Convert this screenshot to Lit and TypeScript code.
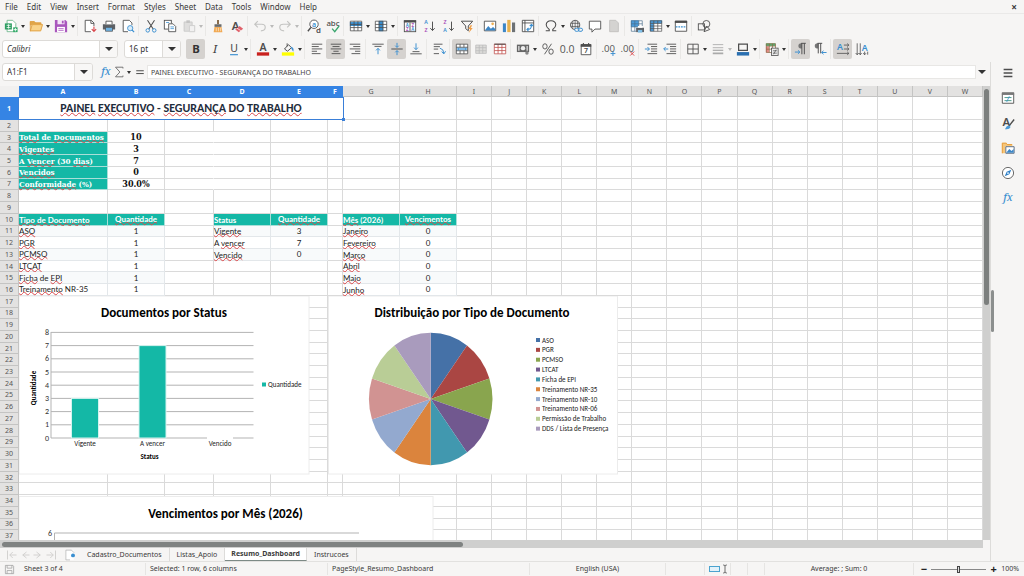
import { LitElement, html, svg, css, nothing } from "lit";
import { customElement, property } from "lit/decorators.js";
import { classMap } from "lit/directives/class-map.js";

const K = "#4d4d4d";
const B = "#3a8fd0";
const R = "#d8474c";
const line = (d: string, c = K, w = 1) =>
  svg`<path d=${d} fill="none" stroke=${c} stroke-width=${w} />`;
const fill = (d: string, c = K) => svg`<path d=${d} fill=${c} />`;
const glyph = (t: string, x: number, y: number, size: number, c = K, weight = "400", style = "normal", family = "Noto Sans") =>
  svg`<text x=${x} y=${y} font-size=${size} fill=${c} font-weight=${weight} font-style=${style} font-family="${family}, sans-serif" text-anchor="middle">${t}</text>`;

const grid = (c = K) => line("M1.5 2.5H14.5V13.5H1.5ZM1.5 6.2H14.5M1.5 9.8H14.5M5.8 2.5V13.5M10.2 2.5V13.5", c, 0.9);

const ICONS: Record<string, unknown> = {
  new: svg`${fill("M3 1H10.5L14 4.5V15H3Z", "#fff")}${line("M3.5 1.5H10L13.5 5V14.5H3.5Z", "#6fb58a")}${fill("M1 5H9V12H1Z", "#2e9e62")}${line("M3 7.2H7.5M3 9.8H7.5M5.2 6V11", "#fff", 0.9)}${fill("M10.5 9.5H15.5V15H10.5Z", "#2fa866")}${line("M13 10.3V14.2M11 12.2H15", "#fff", 1)}`,
  open: svg`${fill("M1 2.5H6L7.5 4H14V7H1Z", "#e0a64a")}${fill("M1 14L3.5 6H16L13.5 14Z", "#f9d38a")}${line("M1.5 14V3H6L7.5 4.5H13.5V6M1.5 13.5L3.6 6.4H15.4L13.4 13.5Z", "#dfa044", 1)}`,
  save: svg`${fill("M1 1H13L15 3V15H1Z", "#a957bd")}${fill("M4 1H12V6H4Z", "#f4e7f7")}${fill("M9 2H11V5H9Z", "#a957bd")}${fill("M3.5 9H12.5V15H3.5Z", "#fff")}${line("M5 11H11M5 13H11", "#a957bd", 0.9)}`,
  pdf: svg`${fill("M3 1H10L13 4V15H3Z", "#fff")}${line("M9 14.5H2.5V1.5H9.5L12.5 4.5V8M9 1.5V5H12.5", K)}${line("M12.5 8.5V14M10 11.5L12.5 14.3L15 11.5", R, 1.3)}`,
  print: svg`${fill("M1 6H15V12H1Z", "#5d6166")}${fill("M4 2H12V6H4Z", "#fff")}${line("M4.5 6V2.5H11.5V6", K)}${fill("M4 9.5H12V14H4Z", "#6fb3e4")}${line("M4 9.5H12V14H4Z", K, 0.8)}`,
  preview: svg`${fill("M3 1H10L13 4V15H3Z", "#fff")}${line("M8 14.5H2.5V1.5H9.5L12.5 4.5V7", K)}<circle cx="10.5" cy="10.5" r="3" fill="#d9ecf9" stroke=${B} />${line("M12.6 12.6L15 15", B, 1.3)}`,
  cut: svg`${line("M4 1.5L10.5 11.5M12 1.5L5.5 11.5", K, 1.2)}<circle cx="4.3" cy="13" r="2" fill="none" stroke=${B} stroke-width="1.1" /><circle cx="11.7" cy="13" r="2" fill="none" stroke=${B} stroke-width="1.1" />`,
  copy: svg`<rect x="1.5" y="1.5" width="8" height="10" fill="#fff" stroke=${K} />${fill("M6 5H12L15 8V15H6Z", "#fff")}${line("M6.5 5.5H11.5L14.5 8.5V14.5H6.5Z", K)}${line("M8.5 9H12.5M8.5 11H12.5M3.5 4H7", B, 0.9)}`,
  paste: svg`<g opacity=".45">${fill("M2 3H12V14H2Z", "#c4c4c2")}${line("M2.5 3.5H11.5V14H2.5Z", "#999")}${fill("M5 1.5H9V4.5H5Z", "#888")}${fill("M8 7H15V15H8Z", "#eee")}${line("M8.5 7.5H14.5V14.5H8.5Z", "#999")}</g>`,
  clone: svg`${line("M8 1V6", "#7b5a35", 2)}${fill("M4 6H12V9H4Z", "#6b6b6b")}${fill("M4 9H12L13 15H3Z", "#f1a850")}${line("M6 10V14M8.5 10V14M11 10V14", "#fff", 0.6)}`,
  clear: svg`${glyph("A", 6.5, 12, 13, K, "600")}${fill("M6 12L11 8L15 11L10 15Z", "#e0626b")}${line("M8 10.5L12.5 13.4", "#fff", 0.8)}`,
  undo: line("M5.5 2.5L2 6L5.5 9.5M2.5 6H10Q14 6 14 9.5Q14 13.5 9 13.5", "#c4c4c2", 1.3),
  redo: line("M10.5 2.5L14 6L10.5 9.5M13.5 6H6Q2 6 2 9.5Q2 13.5 7 13.5", "#c4c4c2", 1.3),
  find: svg`<circle cx="8" cy="6" r="4.8" fill="#fff" stroke=${K} />${line("M4.5 9.5L1 14", K, 1.6)}${glyph("a", 8, 8.6, 8, B, "600")}${glyph("d", 13, 15.5, 9, K, "600")}`,
  spell: svg`${glyph("abc", 8, 8, 9, K, "500")}${line("M7 11L10 14.5L15 8", "#3aa66e", 1.5)}`,
  row: svg`${fill("M1 2H15V14H1Z", "#fff")}${fill("M1 3.5H15V8H1Z", B)}${grid()}`,
  col: svg`${fill("M1 2H15V14H1Z", "#fff")}${fill("M5.5 2H10.5V14H5.5Z", B)}${grid()}`,
  sort: svg`<rect x="1.5" y="2" width="13" height="12.5" fill="#fff" stroke=${K} />${fill("M1 1.5H15V4H1Z")}${line("M8 4V14", K)}${glyph("A", 4.8, 9, 5, B, "700")}${glyph("Z", 4.8, 14, 5, "#a64fb8", "700")}${glyph("Z", 11.2, 9, 5, "#a64fb8", "700")}${glyph("A", 11.2, 14, 5, B, "700")}`,
  az: svg`${glyph("A", 4.5, 6.2, 6, B, "600")}${glyph("Z", 4.5, 15, 6, "#a64fb8", "600")}${line("M12 3V13M9.5 10.5L12 13.2L14.5 10.5", K, 1.1)}`,
  za: svg`${glyph("Z", 4.5, 6.2, 6, "#a64fb8", "600")}${glyph("A", 4.5, 15, 6, B, "600")}${line("M12 3V13M9.5 10.5L12 13.2L14.5 10.5", K, 1.1)}`,
  filter: svg`${line("M1.5 2.5H14.5L9.5 8V13.5L6.5 11V8Z", K, 1.1)}${fill("M12 7L9.5 11.5H11.5L10 16L14.5 10.3H12.3L14 7Z", "#f0a04b")}`,
  image: svg`${fill("M1 2H15V14H1Z", "#fff")}${line("M1.5 2.5H14.5V13.5H1.5Z", K)}${fill("M2 13L6 8L9 11L11.5 9L14 11.5V13Z", "#3c86c6")}<circle cx="11" cy="5.5" r="1.5" fill="#f0ae4f" />`,
  chart: svg`${fill("M1 5H4.5V15H1Z", "#3c86c6")}${fill("M6 1H9.8V15H6Z", "#e9b24d")}${fill("M11.4 4H15V15H11.4Z", "#6d7175")}`,
  pivot: svg`${fill("M1.5 1.5H14.5V14.5H1.5Z", "#fff")}${line("M1.5 1.5H14.5V14.5H1.5ZM1.5 4.5H14.5M4.5 1.5V14.5", K)}${line("M7 12Q12 12 12 7M10 8L12 6.3L14 8M8.6 10.2L6.8 12L8.6 13.8", B, 1.2)}`,
  omega: line("M2 13.5H6V12Q2.5 9.5 2.5 6.7Q2.8 2 8 2Q13.2 2 13.5 6.7Q13.5 9.5 10 12V13.5H14", K, 1.2),
  link: svg`<circle cx="7" cy="6.8" r="5.3" fill="none" stroke=${K} />${line("M2 5H12M2 8.5H12M7 1.5V12M4.6 2.5Q3 7 4.6 11M9.4 2.5Q11 7 9.4 11", K, 0.8)}<rect x="6.5" y="10.5" width="5" height="3.6" rx="1.8" fill="#f6f5f4" stroke=${B} stroke-width="1.1" /><rect x="10.5" y="10.5" width="5" height="3.6" rx="1.8" fill="none" stroke=${B} stroke-width="1.1" />`,
  comment: svg`${fill("M1.5 2.5H14.5V11.5H8L4.5 15V11.5H1.5Z", "#fff")}${line("M1.5 2.5H14.5V11.5H8L4.5 15V11.5H1.5Z", K)}`,
  header: svg`${fill("M3 1.5H10L13 4.5V14.5H3Z", "#d4d3d1")}${line("M3 1.5H10L13 4.5V14.5H3Z", "#bdbcba", 0.9)}`,
  printarea: svg`${fill("M1 1.5H14V14H1Z", "#fff")}${fill("M1 1.5H10V9H1Z", "#4c9bd9")}${line("M1.5 2H14V8M1.5 2V14H7M1.5 5.5H14M1.5 9H10M5.5 2V14M10 2V9", "#4a6f8d", 0.8)}${fill("M7 10H16V15H7Z", "#5d6166")}${fill("M9 12.5H14V15.5H9Z", "#7fbfe8")}${fill("M9 8H14V10H9Z", "#fff")}`,
  freeze: svg`${fill("M1 1.5H15V14H1Z", "#fff")}${fill("M1 1.5H15V5H1ZM1 1.5H5.5V14H1Z", "#4c9bd9")}${line("M1.5 2H14.5V14H1.5ZM1.5 5H14.5M1.5 8H14.5M1.5 11H14.5M5.5 2V14M10 2V14", K, 0.8)}`,
  split: svg`${fill("M1 2H15V14H1Z", "#fff")}${line("M1.5 2.5H14.5V14H1.5Z", K)}${fill("M1 2H15V4.5H1Z")}<path d="M2 9H14" stroke=${B} stroke-width="1.2" stroke-dasharray="2 1" />`,
  shapes: svg`<rect x="1.5" y="5.5" width="7" height="7" fill="none" stroke=${K} /><circle cx="10.7" cy="5.7" r="4" fill="none" stroke=${K} />${line("M8 14.5L14.5 12L11 8Z", K)}`,
  B: glyph("B", 8, 13, 13, "#333", "700"),
  I: glyph("I", 8, 13, 13, "#444", "400", "italic", "Noto Serif"),
  U: svg`${glyph("U", 8, 11.5, 12, "#444", "400")}${line("M3.5 14.5H12.5", B, 1.3)}`,
  A: svg`${glyph("A", 8, 10.2, 12, K, "600")}${fill("M1 11.8H15V15.6H1Z", "#c9211e")}`,
  mark: svg`${line("M4 8L8.5 3L12 6.5L7.5 10.5Z", K, 1.1)}${line("M7 1.5V5", K)}${fill("M11 5Q15.5 6 14 11L12 8Z", "#3f8fd0")}${fill("M1 11.8H15V15.6H1Z", "#ffff00")}`,
  left: line("M2 2.5H14M2 5.2H10M2 7.9H14M2 10.6H8M2 13.3H12", K, 1),
  center: line("M2 2.5H14M4 5.2H12M2 7.9H14M5 10.6H11M3 13.3H13", K, 1),
  right: line("M2 2.5H14M6 5.2H14M2 7.9H14M8 10.6H14M4 13.3H14", K, 1),
  top: svg`${line("M1.5 2.5H14.5M4 5H12", K, 1)}${line("M8 14V7.5M5.8 9.6L8 7.2L10.2 9.6", B, 1.1)}`,
  middle: svg`${line("M1.5 8H14.5", K, 1.1)}${line("M8 1V6M6 4.2L8 6.2L10 4.2M8 15V10M6 11.8L8 9.8L10 11.8", B, 1.1)}`,
  bottom: svg`${line("M1.5 13.5H14.5M4 11H12", K, 1)}${line("M8 1.5V8.5M5.8 6.4L8 8.8L10.2 6.4", B, 1.1)}`,
  wrap: svg`${line("M2 2.5H12M2 5.3H9M2 8.1H7M2 13.3H8", K, 1)}${line("M9 7Q13.5 8 13.5 13M11 11L13.5 13.6L15.5 10.6", B, 1.1)}`,
  merge: svg`${fill("M1.5 2.5H14.5V13.5H1.5Z", "#fff")}${fill("M1.5 6H14.5V10H1.5Z", "#bcdcf3")}${line("M1.5 2.5H14.5V13.5H1.5ZM1.5 6H14.5M1.5 10H14.5M5.8 2.5V6M10.2 2.5V6M5.8 10V13.5M10.2 10V13.5", K, 0.9)}${line("M3 8H13M4.5 6.8L3 8L4.5 9.2M11.5 6.8L13 8L11.5 9.2", B, 1)}`,
  mergeoff: svg`${fill("M2 3.5H14V13H2Z", "#dddcda")}${line("M2 3.5H14V13H2ZM2 6.5H14M2 10H14M6 3.5V13M10 3.5V13", "#bbb", 0.9)}`,
  unmerge: svg`${fill("M1.5 2.5H14.5V13.5H1.5Z", "#fff")}${grid("#c0504d")}${line("M1.5 2.5H14.5", K, 1.2)}`,
  money: svg`${fill("M1 3H15V11.5H1Z", "#666")}<circle cx="8" cy="7" r="2.5" fill="#eee" />${fill("M2.5 4.5H4V10H2.5ZM12 4.5H13.5V10H12Z", "#ddd")}<circle cx="12.5" cy="12.5" r="2" fill="#888" />`,
  percent: svg`<ellipse cx="4.5" cy="5" rx="2.5" ry="3" fill="none" stroke=${K} /><ellipse cx="11.5" cy="11" rx="2.5" ry="3" fill="none" stroke=${K} />${line("M12 2L4 14", K, 1)}`,
  decimal: glyph("0.0", 8, 12.5, 12, "#555", "400", "normal", "Open Sans"),
  date: svg`${fill("M2 3H14V14.5H2Z", "#fff")}${line("M2.5 3H13.5V14.5H2.5Z", K)}${fill("M2 2.5H14V5.5H2Z")}${line("M5 1V3.5M11 1V3.5", K, 1.2)}${glyph("7", 8, 13, 8, K, "600")}`,
  adddec: svg`${glyph(".00", 7, 11, 11, "#555", "400", "normal", "Open Sans")}${line("M12.5 10.5V16M9.8 13.2H15.3", B, 1.1)}`,
  deldec: svg`${glyph(".00", 7, 11, 11, "#555", "400", "normal", "Open Sans")}${line("M10.5 11L15 15.5M15 11L10.5 15.5", R, 1.1)}`,
  indent: svg`${line("M4 2.5H15M8 5.2H15M8 7.9H15M8 10.6H15M4 13.3H15", K)}${line("M1 8H6M4 5.8L6.2 8L4 10.2", B, 1.1)}`,
  outdent: svg`${line("M4 2.5H15M8 5.2H15M8 7.9H15M8 10.6H15M4 13.3H15", K)}${line("M1 8H6M3 5.8L.8 8L3 10.2", B, 1.1)}`,
  borders: line("M2 2.5H14V13.5H2ZM8 2.5V13.5M2 8H14", K, 1),
  lines: svg`${line("M2 3H14M2 6.5H14", "#aaa", 1)}${line("M2 9.5H14", "#aaa", 1.4)}${line("M2 13H14", "#aaa", 2)}`,
  bcolor: svg`${line("M3 2.5H13V9.5H3Z", K, 1.4)}${fill("M1 11.5H15V15.5H1Z", "#2a6fb0")}`,
  cond: svg`${fill("M1 1.5H12V12H1Z", "#fff")}${fill("M1 1.5H12V4.5H1Z", "#57b174")}${fill("M1 5H4.5V12H1Z", "#e38a84")}${line("M1.5 2H12V12H1.5ZM1.5 4.7H12M1.5 8.2H12M5 2V12M8.6 2V12", "#8d6a48", 0.8)}<rect x="7.5" y="7" width="7.5" height="8.5" fill="#eee" stroke=${K} stroke-width=".9" />${line("M9 10H13.5M9 12.7H13.5M12.8 8.7L9.8 14", K, 0.8)}`,
  ltr: svg`${fill("M9 1.5H8.2Q5 1.5 5 4.5Q5 7.5 9 7.5Z", "#777")}${line("M13.5 1.5H8.2M9 1.5V14M11.8 1.5V14", K, 1.1)}${line("M1 11.5H6.5M4.5 9.5L6.7 11.5L4.5 13.5", B, 1.1)}`,
  rtl: svg`${fill("M6 1.5H5.2Q2 1.5 2 4.5Q2 7.5 6 7.5Z", "#777")}${line("M10.5 1.5H5.2M6 1.5V13M8.8 1.5V13", K, 1.1)}${line("M10 12H15.5M12 10L9.8 12L12 14", B, 1.1)}`,
  hdir: svg`${glyph("A", 4.5, 9.5, 10, B, "600")}${line("M9 3.5H14.5M12.8 1.8L14.7 3.5L12.8 5.2M9 8H14.5M12.8 6.3L14.7 8L12.8 9.7M1 13H14.5M12.8 11.3L14.7 13L12.8 14.7", K, 0.9)}`,
  vdir: svg`${glyph("A", 11, 10, 10, B, "600")}${line("M2.5 1.5V14.5M.8 12.6L2.5 14.6L4.2 12.6M6 1.5V14.5M4.6 12.6L6 14.6L7.6 12.6M11 11V14.5M9.4 12.8L11 14.6L12.6 12.8M14.5 11V14.5", K, 0.9)}`,
  fx: glyph("fx", 8, 11.5, 12, B, "500", "italic", "Noto Serif"),
  sum: line("M12.5 4V2.5H4L9 8L4 13.5H12.5V12", "#666", 1),
  eq: line("M2 6H14M2 10.5H14", K, 1.6),
  menu: line("M3 4H13M3 8H13M3 12H13", K, 1.6),
  props: svg`${fill("M1.5 2H14.5V14H1.5Z", "#fff")}${line("M1.5 2.5H14.5V14H1.5Z", K)}${fill("M1 1.5H15V4.5H1Z", "#777")}${line("M4 7.5H12M4 11H12", "#4a9a8a", 1.1)}${line("M9.5 6L6.5 12.5", B, 0.9)}`,
  styles: svg`${glyph("A", 6, 11, 13, K, "600")}${line("M15 4L9.5 11", K, 1.6)}${fill("M4.5 15Q6 11 9 10.5L11 12.5Q9.5 16 4.5 15Z", "#4b9ad6")}`,
  gallery: svg`${fill("M1 2H6L7 3.5H13V14H1Z", "#f6c67a")}${line("M1.5 14V2.5H6L7 4H12.5", "#e59a3a")}${fill("M5 6H15.5V14.5H5Z", "#fff")}${line("M5.5 6.5H15V14H5.5Z", "#4b5f78")}${fill("M6 13.5L9.5 9L12 11.5L14.5 9V13.5Z", "#3c86c6")}`,
  navigator: svg`<circle cx="8" cy="8" r="6.4" fill="#fff" stroke="#666" stroke-width="1.1" />${fill("M11.8 4.2L9.5 9.5L4.2 11.8L6.5 6.5Z", "#2f80c8")}<circle cx="8" cy="8" r="1" fill="#fff" />`,
  disk: svg`${line("M2 2H13L14 3V14H2ZM4.5 2V6H11.5V2M4.5 14V9.5H11.5V14", "#999", 1)}`,
  cursor: svg`${line("M5 1.5Q8 1.5 8 3.5V12.5Q8 14.5 5 14.5M11 1.5Q8 1.5 8 3.5M8 12.5Q8 14.5 11 14.5", K, 1.3)}`,
  addsheet: svg`${fill("M2 1.5H13V14.5H2Z", "#fff")}${line("M2.5 14.5V1.5H10L13.5 5M2.5 14.5H8", "#aaa", 0.9)}<circle cx="12" cy="8.5" r="2.6" fill=${B} />`,
  first: line("M2 2V14M9 4L5 8L9 12M14 8H5", "#cfcecc", 1.2),
  prev: line("M10 4L5 8L10 12M14 8H5", "#cfcecc", 1.2),
  next: line("M6 4L11 8L6 12M2 8H11", "#cfcecc", 1.2),
  last: line("M14 2V14M7 4L11 8L7 12M2 8H11", "#cfcecc", 1.2),
};

const iconStyles = css`
  button {
    appearance: none;
    border: 0;
    padding: 0;
    margin: 0;
    background: none;
    font: inherit;
    color: inherit;
    display: flex;
    align-items: center;
    justify-content: center;
  }
  .icon { width: 14px; height: 14px; display: block; flex: none; overflow: visible; }
  .caret {
    width: 0;
    height: 0;
    border: 2px solid transparent;
    border-top: 3px solid #333;
    border-bottom: 0;
  }
  .big { border-width: 4px; border-top-width: 4px; }
`;

const icon = (name: string) =>
  html`<svg class="icon" viewBox="0 0 16 16" aria-hidden="true">${ICONS[name]}</svg>`;

/* "|" is a separator, a trailing "+" adds a drop-down arrow, a leading "!" is a pressed toggle, "-" at the end is a disabled arrow */
@customElement("tool-strip")
class ToolStrip extends LitElement {
  @property() items = "";
  static styles = [
    iconStyles,
    css`
      :host { display: flex; align-items: center; }
      .tool { width: 19px; height: 20px; border-radius: 2px; }
      .pressed { background: #d5d2cf; }
      .drop { width: 6px; height: 20px; }
      .dim { opacity: 0.3; }
      .sep { width: 1px; height: 20px; margin: 0 2px 0 1px; background: #e9e8e6; }
    `,
  ];
  render() {
    return this.items.split(" ").map((it) => {
      if (it === "|") return html`<span class="sep"></span>`;
      const name = it.replace(/[!+-]/g, "");
      return html`<button class=${classMap({ tool: true, pressed: it[0] === "!" })} aria-label=${name}>${icon(name)}</button>
        ${/[+-]$/.test(it)
          ? html`<button class=${classMap({ drop: true, dim: it.endsWith("-") })} aria-label="${name} options"><span class="caret"></span></button>`
          : nothing}`;
    });
  }
}

type Cell = { text: string; kind: string };
const cells: Record<string, Cell> = {};
const put = (ref: string, text: string, kind: string) => (cells[ref] = { text, kind });

[["~Total~ de ~Documentos~", "10"], ["~Vigentes~", "3"], ["A ~Vencer~ (30 ~dias~)", "7"], ["~Vencidos~", "0"], ["~Conformidade~ (%)", "30.0%"]].forEach(([a, b], i) => {
  put(`A${i + 3}`, a, "kpi");
  put(`B${i + 3}`, b, "kpi-value");
});
const block = (c1: string, c2: string, h: string[], rows: string[][], low: boolean) => {
  put(`${c1}10`, h[0], "head low");
  put(`${c2}10`, h[1], "head mid");
  rows.forEach(([a, b], i) => {
    const band = i % 2 ? "" : " band";
    put(`${c1}${i + 11}`, a, (low ? "name low" : "name") + band);
    put(`${c2}${i + 11}`, b, "num" + band);
  });
};
block("A", "B", ["~Tipo de Documento~", "~Quantidade~"], [["~ASO~", "1"], ["~PGR~", "1"], ["~PCMSO~", "1"], ["~LTCAT~", "1"], ["~Ficha~ de ~EPI~", "1"], ["~Treinamento~ NR-35", "1"]], false);
block("D", "E", ["Status", "~Quantidade~"], [["~Vigente~", "3"], ["A ~vencer~", "7"], ["~Vencido~", "0"]], true);
block("G", "H", ["~Mês~ (2026)", "~Vencimentos~"], [["~Janeiro~", "0"], ["~Fevereiro~", "0"], ["~Março~", "0"], ["~Abril~", "0"], ["~Maio~", "0"], ["~Junho~", "0"]], true);

const rich = (t: string) =>
  t.split("~").map((part, i) => (i % 2 ? html`<span class="typo">${part}</span>` : part));

const COLS = "ABCDEFGHIJKLMNOPQRSTUVW".split("");
const PIE: [string, string][] = [
  ["ASO", "#4571a7"], ["PGR", "#aa4643"], ["PCMSO", "#89a54e"], ["LTCAT", "#71588f"], ["Ficha de EPI", "#4198af"],
  ["Treinamento NR-35", "#db843d"], ["Treinamento NR-10", "#93a9cf"], ["Treinamento NR-06", "#d19392"],
  ["Permissão de Trabalho", "#b9cd96"], ["DDS / Lista de Presença", "#a99bbd"],
];

@customElement("sheet-grid")
class SheetGrid extends LitElement {
  static styles = css`
    :host { display: block; position: relative; overflow: hidden; background: #fff; min-width: 0; }
    table {
      display: grid;
      grid-template-columns: 19px 89px 57px 49px 57px 57px 15px 57px 57px repeat(15, 1fr);
      grid-template-rows: 11px 23px repeat(36, 1fr);
      height: 456px;
      font: 8px/10px Lato, sans-serif;
      color: #222;
    }
    thead, tbody, tr { display: contents; }
    th, td {
      padding: 0;
      min-width: 0;
      min-height: 0;
      display: flex;
      align-items: center;
      justify-content: center;
      white-space: nowrap;
      border: 0 solid #dadada;
      border-width: 0 1px 1px 0;
      box-sizing: border-box;
    }
    th { background: #e3e2e1; border-color: #c4c4c3; color: #555; font: 7px/9px "Noto Sans", sans-serif; }
    .on { background: #3584e4; border-color: #3584e4; color: #fff; font-weight: 700; }
    .corner { background: #f1f0ef; border: 0; }
    .title {
      grid-column: span 6;
      border: 1px solid #3a7fd8;
      margin: 0 -1px 0 -1px;
      font-family: Carlito, Lato, sans-serif;
      font-size: 12px;
      line-height: 16px;
      font-weight: 700;
      color: #1f2d3d;
      position: relative;
      padding-bottom: 1px;
    }
    .title::after { content: ""; position: absolute; right: -2px; bottom: -2px; width: 3px; height: 3px; background: #3a7fd8; }
    .typo { text-decoration: underline wavy #d9484a 1px; text-decoration-skip-ink: none; text-underline-offset: -1px; }
    .title .typo { text-underline-offset: 0; }
    .kpi, .head { background: #14b8a6; color: #fff; border-color: #a9dfd8; font-weight: 700; }
    .kpi, .kpi-value { font-family: "DejaVu Serif Condensed", "DejaVu Serif", serif; font-weight: 700; }
    .kpi { justify-content: flex-start; font-size: 8px; }
    .kpi-value { font-size: 9px; color: #111; }
    .name { justify-content: flex-start; border-color: #e3e7ea; }
    .num { border-color: #e3e7ea; }
    .low { justify-content: flex-start; align-items: flex-end; }
    .band { background: #f8fafb; }
    .open { border-right-color: transparent; }
    .charts { position: absolute; left: 19px; top: 210px; width: 600px; height: 250px; font-family: Carlito, Lato, sans-serif; }
  `;
  private charts() {
    const cx = 411.7, cy = 103, rx = 61.7, ry = 66.3;
    const at = (i: number) => {
      const a = (i / PIE.length) * 2 * Math.PI;
      return `${(cx + rx * Math.sin(a)).toFixed(1)} ${(cy - ry * Math.cos(a)).toFixed(1)}`;
    };
    const y = (v: number) => 142 - v * 13.2;
    return html`<svg class="charts" viewBox="0 0 600 250" role="img" aria-label="Gráficos">
      <rect x="0" y="0" width="290" height="178" fill="#fff" stroke="#ececec" />
      <text x="145" y="21" font-size="13" font-weight="700" text-anchor="middle">Documentos por Status</text>
      ${[0, 1, 2, 3, 4, 5, 6, 7, 8].map((v) => svg`
        <path d="M32 ${y(v)}H234.5" stroke="#b3b3b3" stroke-width="1" />
        <text x="30" y=${y(v) + 2.5} font-size="8" fill="#333" text-anchor="end">${v}</text>`)}
      <path d="M32 36V142" stroke="#b3b3b3" />
      <path d="M188 142H214" stroke="#fff" stroke-width="2" />
      ${[["Vigente", 66, 3], ["A vencer", 133.5, 7], ["Vencido", 201, 0]].map(([n, x, v]: any) => svg`
        ${v ? svg`<rect x=${x - 13.5} y=${y(v)} width="27" height=${142 - y(v)} fill="#14b8a6" stroke="#d5f3ef" />` : nothing}
        <text x=${x} y="150" font-size="7" fill="#222" text-anchor="middle">${n}</text>`)}
      <text x="130.5" y="163" font-size="7" font-weight="700" text-anchor="middle">Status</text>
      <text transform="translate(17 92) rotate(-90)" font-size="7" font-weight="700" text-anchor="middle">Quantidade</text>
      <rect x="243" y="86.5" width="4" height="4" fill="#14b8a6" />
      <text x="249" y="91" font-size="7" fill="#222">Quantidade</text>

      <rect x="309.5" y="0" width="289" height="178" fill="#fff" stroke="#ececec" />
      <text x="453" y="21" font-size="13" font-weight="700" text-anchor="middle">Distribuição por Tipo de Documento</text>
      ${PIE.map(([n, c], i) => svg`
        <path d="M${cx} ${cy}L${at(i)}A${rx} ${ry} 0 0 1 ${at(i + 1)}Z" fill=${c} />
        <rect x="517" y=${42 + i * 9.85} width="4" height="4" fill=${c} />
        <text x="523" y=${46.5 + i * 9.85} font-size="7" fill="#222">${n}</text>`)}

      <rect x="0" y="200.5" width="414" height="120" fill="#fff" stroke="#ececec" />
      <text x="206.5" y="222" font-size="13" font-weight="700" text-anchor="middle">Vencimentos por Mês (2026)</text>
      <path d="M35.5 250V237H340" fill="none" stroke="#b3b3b3" />
      <text x="33" y="239.5" font-size="8" fill="#333" text-anchor="end">6</text>
    </svg>`;
  }
  render() {
    const body = [];
    for (let r = 2; r <= 37; r++) {
      body.push(html`<tr><th scope="row">${r}</th>${COLS.map((c) => {
        const cell = cells[c + r];
        const open = c === "C" && r > 2 && r < 8 ? "open" : "";
        return html`<td class="${cell ? cell.kind : open}">${cell ? html`<span>${rich(cell.text)}</span>` : nothing}</td>`;
      })}</tr>`);
    }
    return html`<table>
        <thead><tr><th class="corner" aria-label="Select all"></th>${COLS.map((c) => html`<th scope="col" class=${c <= "F" ? "on" : ""}>${c}</th>`)}</tr></thead>
        <tbody>
          <tr><th scope="row" class="on">1</th><td class="title" colspan="6"><span>${rich("~PAINEL~ ~EXECUTIVO~ - ~SEGURANÇA~ DO ~TRABALHO~")}</span></td>${COLS.slice(6).map(() => html`<td></td>`)}</tr>
          ${body}
        </tbody>
      </table>
      ${this.charts()}`;
  }
}

@customElement("app-root")
class AppRoot extends LitElement {
  static styles = [
    iconStyles,
    css`
      :host {
        display: flex;
        flex-direction: column;
        height: 100vh;
        overflow: hidden;
        background: #f6f5f4;
        color: #3a3a3a;
        font: 7px/10px "Noto Sans", sans-serif;
      }
      .menu { display: flex; align-items: center; height: 14px; gap: 9px; padding: 0 5px; flex: none; font-size: 8px; border-bottom: 1px solid #eae9e8; box-sizing: border-box; }
      .close { margin-left: auto; width: 10px; font-weight: 700; font-size: 10px; }
      .bar { display: flex; align-items: center; height: 24px; flex: none; padding-left: 1px; }
      .format { box-sizing: border-box; padding: 0 2px 2px 2px; }
      .combo { display: flex; height: 18px; border: 1px solid #dddbd8; border-radius: 3px; background: #fff; box-sizing: border-box; overflow: hidden; }
      .combo input { border: 0; padding: 0 4px; min-width: 0; flex: 1; font: 8px/12px "Noto Sans", sans-serif; color: #333; background: none; outline: 0; }
      .combo button { width: 18px; border-left: 1px solid #dddbd8; background: #f8f7f6; }
      .family { width: 116px; margin-right: 6px; }
      .family input { font-style: italic; }
      .size { width: 57px; margin-right: 5px; }
      .ref { width: 91px; }
      .main { display: flex; flex: 1; min-height: 0; }
      .work { flex: 1; min-width: 0; display: flex; flex-direction: column; border-right: 1px solid #dddcda; }
      .formula { display: flex; align-items: center; height: 24px; padding: 0 2px 4px; box-sizing: border-box; flex: none; }
      .formula > button { width: 13px; }
      .formula > .first { margin-left: 6px; }
      .formula > .arrow { width: 7px; }
      .formula > .equal { margin-left: 1px; }
      .formula .end { width: 12px; }
      .equal .icon { width: 10px; height: 10px; }
      .line { flex: 1; min-width: 0; height: 14px; margin-left: 1px; box-sizing: border-box; border: 1px solid #e8e7e5; padding: 0 3px; background: #fff; color: #444; outline: 0; font: 7px/12px "Noto Sans", sans-serif; }
      .sheet { flex: 1; min-height: 0; display: grid; grid-template-columns: 1fr 7px; }
      .vtrack { background: #cfcfce; padding: 3px 1px 0; }
      .vthumb { height: 48%; background: #7c7f7e; border-radius: 3px; }
      .htrack { height: 8px; flex: none; background: #cfcfce; padding: 2px 0 1px 2px; margin-right: 7px; box-sizing: border-box; }
      .hthumb { width: 47%; height: 5px; background: #7f8281; border-radius: 3px; }
      .tabs { height: 13px; flex: none; display: flex; align-items: center; }
      .nav { display: flex; padding: 0 7px 0 5px; }
      .nav button { width: 13px; }
      .tabs .icon { width: 12px; height: 12px; }
      .tab { height: 13px; padding: 0 7px; border-right: 1px solid #dddcda; }
      .lead { margin-left: 4px; }
      .current { background: #fff; font-weight: 700; border-bottom: 1px solid #7d8a86; padding: 0 6px; box-sizing: border-box; }
      .side { width: 33px; flex: none; box-sizing: border-box; padding: 1px 0 0 1px; display: flex; flex-direction: column; align-items: center; gap: 5px; position: relative; }
      .side button { width: 20px; height: 20px; }
      .split { position: absolute; left: 0; top: 228px; width: 3px; height: 42px; border-radius: 2px; background: #8c8f8e; }
      .status {
        height: 15px;
        flex: none;
        box-sizing: border-box;
        border-top: 1px solid #e2e1df;
        display: grid;
        align-items: center;
        grid-template-columns: 20px 126fr 182fr 202fr 136fr 39px 26px 17px 17px 149fr 110px;
      }
      .status > span { border-right: 1px solid #e6e5e3; padding-left: 4px; height: 12px; line-height: 12px; box-sizing: border-box; }
      .status > .disk { padding-left: 4px; border: 0; display: flex; align-items: center; }
      .disk .icon { width: 11px; height: 11px; }
      .status > .mid { text-align: center; padding: 0; }
      .status > .sel { display: flex; align-items: center; }
      .sel .icon { width: 10px; height: 10px; }
      .box { width: 9px; height: 4px; border: 1px solid #4ba3cf; background: #e3f2fa; }
      .zoom { display: flex; align-items: center; justify-content: space-between; padding: 0 5px 0 6px; }
      .zoom button { width: 8px; font-size: 11px; font-weight: 700; color: #222; }
      input[type="range"] { appearance: none; width: 55px; height: 8px; margin: 0; background: linear-gradient(#888, #888) center / 100% 1px no-repeat; }
      input[type="range"]::-webkit-slider-thumb { appearance: none; width: 3px; height: 7px; background: #ddd; border: 1px solid #444; box-sizing: border-box; }
    `,
  ];
  render() {
    return html`
      <nav class="menu">
        ${["File", "Edit", "View", "Insert", "Format", "Styles", "Sheet", "Data", "Tools", "Window", "Help"].map((m) => html`<button>${m}</button>`)}
        <button class="close" aria-label="Close">×</button>
      </nav>
      <div class="bar">
        <tool-strip items="new+ open+ save+ | pdf print preview | cut copy paste- | clone clear | undo- redo- | find spell | row+ col+ | sort az za filter | image chart pivot | omega+ link comment header | printarea freeze+ split | shapes"></tool-strip>
      </div>
      <div class="bar format">
        <div class="combo family"><input aria-label="Font name" value="Calibri" /><button aria-label="Font list"><span class="caret big"></span></button></div>
        <div class="combo size"><input aria-label="Font size" value="16 pt" /><button aria-label="Size list"><span class="caret big"></span></button></div>
        <tool-strip items="!B I U+ | A+ mark+ | left !center right | top !middle bottom | wrap | !merge mergeoff unmerge | money+ percent decimal date | adddec deldec | indent outdent | borders+ lines- bcolor+ | cond+ | !ltr rtl | !hdir vdir"></tool-strip>
      </div>
      <div class="main">
        <div class="work">
          <div class="formula">
            <div class="combo ref"><input aria-label="Name box" value="A1:F1" /><button aria-label="Name list"><span class="caret big"></span></button></div>
            <button class="first" aria-label="Function wizard">${icon("fx")}</button>
            <button aria-label="Sum">${icon("sum")}</button>
            <button class="arrow" aria-label="Sum options"><span class="caret"></span></button>
            <button class="equal" aria-label="Formula">${icon("eq")}</button>
            <input class="line" aria-label="Input line" value="PAINEL EXECUTIVO - SEGURANÇA DO TRABALHO" />
            <button class="end" aria-label="Expand"><span class="caret big"></span></button>
          </div>
          <div class="sheet">
            <sheet-grid></sheet-grid>
            <div class="vtrack"><div class="vthumb"></div></div>
          </div>
          <div class="htrack"><div class="hthumb"></div></div>
          <div class="tabs">
            <div class="nav">${["first", "prev", "next", "last"].map((n) => html`<button disabled aria-label=${n}>${icon(n)}</button>`)}</div>
            <button aria-label="Add sheet">${icon("addsheet")}</button>
            <button class="tab lead">Cadastro_Documentos</button>
            <button class="tab">Listas_Apoio</button>
            <button class="tab current">Resumo_Dashboard</button>
            <button class="tab">Instrucoes</button>
          </div>
        </div>
        <div class="side">
          ${["menu", "props", "styles", "gallery", "navigator", "fx"].map((n) => html`<button aria-label=${n}>${icon(n)}</button>`)}
          <div class="split"></div>
        </div>
      </div>
      <footer class="status">
        <span class="disk">${icon("disk")}</span>
        <span>Sheet 3 of 4</span>
        <span>Selected: 1 row, 6 columns</span>
        <span>PageStyle_Resumo_Dashboard</span>
        <span class="mid">English (USA)</span>
        <span></span>
        <span class="sel"><i class="box"></i>${icon("cursor")}</span>
        <span></span>
        <span></span>
        <span class="mid">Average: ; Sum: 0</span>
        <div class="zoom"><button aria-label="Zoom out">−</button><input type="range" aria-label="Zoom" /><button aria-label="Zoom in">+</button><span>100%</span></div>
      </footer>
    `;
  }
}
